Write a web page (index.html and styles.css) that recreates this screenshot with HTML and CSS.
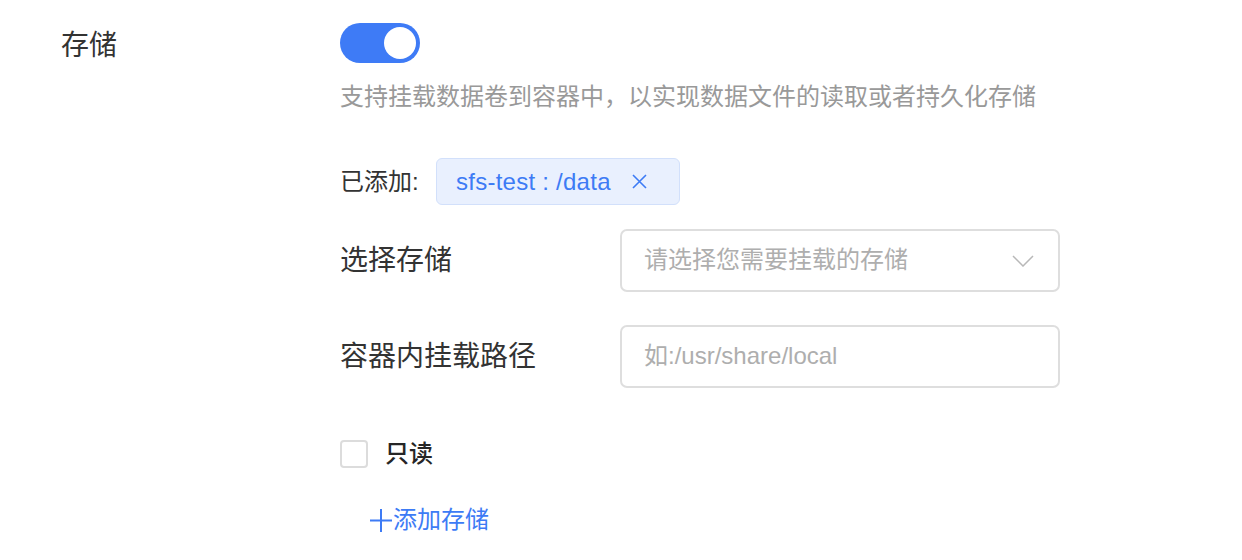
FILE: index.html
```html
<!DOCTYPE html>
<html lang="zh-CN">
<head>
<meta charset="utf-8">
<title>存储</title>
<link rel="stylesheet" href="styles.css">
</head>
<body>
<div class="form">
  <div class="section-label">存储</div>
  <div class="section-body">
    <div class="switch-row">
      <span class="switch"><span class="knob"></span></span>
    </div>
    <p class="desc">支持挂载数据卷到容器中，以实现数据文件的读取或者持久化存储</p>
    <div class="added-row">
      <span class="added-label">已添加:</span>
      <span class="tag">
        <span class="tag-text">sfs-test : /data</span>
        <svg class="tag-close" width="15" height="15" viewBox="0 0 15 15"><path d="M1 1L14 14M14 1L1 14" stroke="#3d7bf5" stroke-width="1.6" fill="none"/></svg>
      </span>
    </div>
    <div class="field field-first">
      <div class="field-label">选择存储</div>
      <div class="box select">
        <span class="placeholder">请选择您需要挂载的存储</span>
        <svg class="chevron" width="22" height="12" viewBox="0 0 22 12"><path d="M1 1L11 11L21 1" stroke="#b8b8b8" stroke-width="1.5" fill="none"/></svg>
      </div>
    </div>
    <div class="field field-second">
      <div class="field-label">容器内挂载路径</div>
      <div class="box">
        <span class="placeholder">如:/usr/share/local</span>
      </div>
    </div>
    <div class="check-row">
      <span class="checkbox"></span>
      <span class="check-label">只读</span>
    </div>
    <div class="add-row">
      <svg class="plus" width="24" height="24" viewBox="0 0 24 24"><path d="M1 12.5H23M12 1V24" stroke="#3d7bf5" stroke-width="2" fill="none"/></svg>
      <span class="add-text">添加存储</span>
    </div>
  </div>
</div>
</body>
</html>
```
FILE: styles.css
```css
html, body {
  margin: 0;
  padding: 0;
  background: #ffffff;
}
body {
  font-family: "Liberation Sans", "Noto Sans CJK SC", sans-serif;
  color: #333333;
}
.form {
  display: flex;
  padding-left: 61px;
}
.section-label {
  width: 279px;
  flex: none;
  margin-top: 26px;
  height: 40px;
  line-height: 40px;
  font-size: 28px;
  color: #333333;
}
.section-body {
  display: flex;
  flex-direction: column;
  align-items: flex-start;
}
.switch-row {
  margin-top: 23px;
  height: 40px;
}
.switch {
  display: flex;
  justify-content: flex-end;
  align-items: center;
  box-sizing: border-box;
  width: 80px;
  height: 40px;
  padding: 4px;
  border-radius: 20px;
  background: #3e7bf6;
}
.knob {
  width: 32px;
  height: 32px;
  border-radius: 50%;
  background: #ffffff;
}
.desc {
  margin: 17px 0 0;
  height: 34px;
  font-size: 24px;
  line-height: 34px;
  color: #999999;
}
.added-row {
  display: flex;
  align-items: center;
  margin-top: 44px;
  height: 47px;
}
.added-label {
  font-size: 24px;
  line-height: 34px;
  color: #333333;
  width: 96px;
}
.tag {
  display: flex;
  align-items: center;
  box-sizing: border-box;
  height: 47px;
  padding: 0 32px 0 19px;
  border: 1px solid #d2e0fb;
  border-radius: 6px;
  background: #e9f0fe;
}
.tag-text {
  font-size: 24px;
  line-height: 34px;
  letter-spacing: 0.25px;
  color: #3d7bf5;
}
.tag-close {
  margin-left: 21px;
  display: block;
}
.field {
  display: flex;
  align-items: center;
}
.field-first {
  margin-top: 24px;
}
.field-second {
  margin-top: 33px;
}
.field-label {
  width: 280px;
  font-size: 28px;
  line-height: 40px;
  padding-top: 1px;
  color: #333333;
}
.box {
  display: flex;
  align-items: center;
  box-sizing: border-box;
  width: 440px;
  height: 63px;
  padding: 0 24px 0 22px;
  border: 2px solid #dedede;
  border-radius: 7px;
  background: #ffffff;
}
.select {
  justify-content: space-between;
}
.placeholder {
  font-size: 24px;
  line-height: 34px;
  padding-bottom: 1px;
  color: #aeaeae;
}
.chevron {
  display: block;
}
.check-row {
  display: flex;
  align-items: center;
  margin-top: 52px;
  height: 28px;
}
.checkbox {
  box-sizing: border-box;
  width: 28px;
  height: 28px;
  border: 2px solid #dcdcdc;
  border-radius: 4px;
  background: #ffffff;
}
.check-label {
  margin-left: 17px;
  font-size: 24px;
  line-height: 28px;
  font-weight: 500;
  color: #262626;
}
.add-row {
  display: flex;
  align-items: center;
  margin-top: 35px;
  margin-left: 29px;
  height: 34px;
}
.plus {
  display: block;
}
.add-text {
  font-size: 24px;
  line-height: 34px;
  color: #3d7bf5;
}
```
